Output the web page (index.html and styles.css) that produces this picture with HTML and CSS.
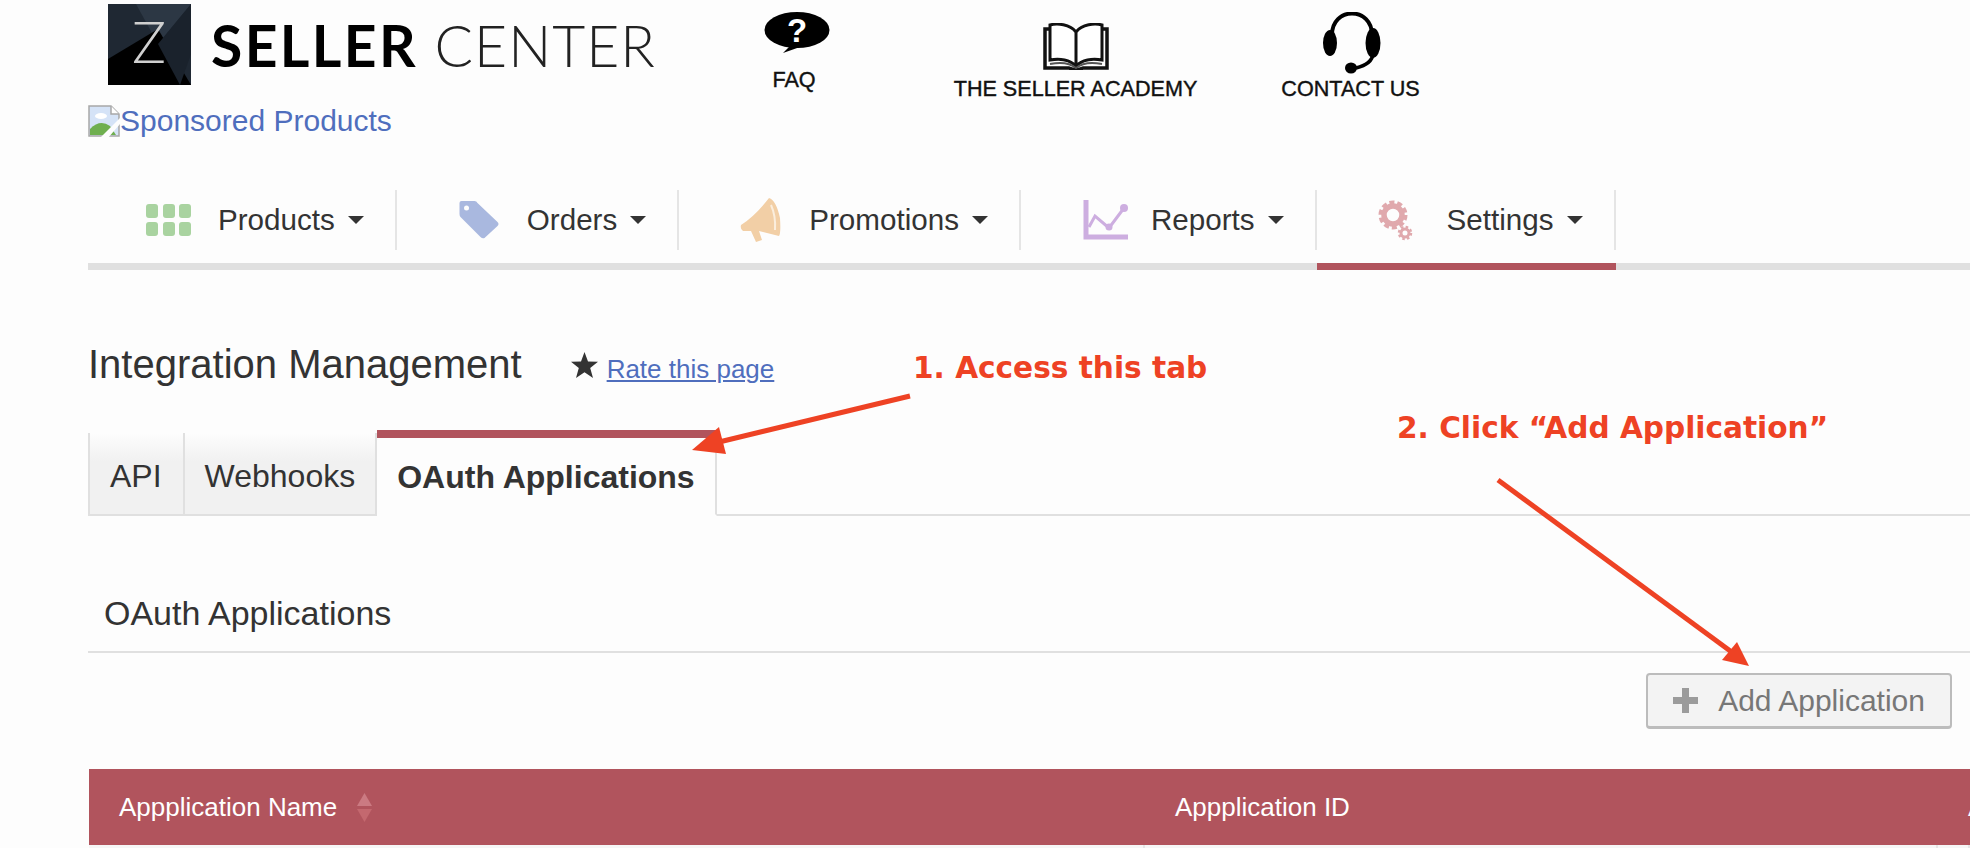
FILE: index.html
```html
<!DOCTYPE html>
<html lang="en">
<head>
    <meta charset="UTF-8">
    <title>Integration Management</title>
    <link rel="stylesheet" href="styles.css">
</head>
<body>
    <div class="page">
        <header class="header">
            <a class="logo">
                <svg class="logo-mark" width="83" height="81" viewBox="0 0 83 81">
                    <rect width="83" height="81" fill="#1f2833"/>
                    <polygon points="28,0 83,0 50,40" fill="#2c3744"/>
                    <polygon points="0,55 50,25 83,81 0,81" fill="#000"/>
                    <polygon points="50,40 83,0 83,50 72,81" fill="#1a222c"/>
                    <text x="41" y="59" text-anchor="middle" class="logo-z">Z</text>
                </svg>
                <span class="logo-text"><b>SELLER</b> CENTER</span>
            </a>
            <a class="help-link help-faq">
                <svg class="faq-icon" width="66" height="42" viewBox="0 0 66 42">
                    <ellipse cx="33" cy="18" rx="32.5" ry="18" fill="#000"/>
                    <path d="M27 33 L36 35 L19 41 Z" fill="#000"/>
                    <text x="33" y="30" text-anchor="middle" class="faq-mark">?</text>
                </svg>
                <span>FAQ</span>
            </a>
            <a class="help-link help-academy">
                <svg width="68" height="47" viewBox="0 0 68 47">
                    <path d="M34 9 C28 1 15 0 8 2 V37 C18 35 28 37 34 43 C40 37 50 35 60 37 V2 C53 0 40 1 34 9 V43" fill="#fff" stroke="#111" stroke-width="3"/>
                    <path d="M8 6 H3 V45 H27 Q34 48 41 45 H65 V6 H60" fill="none" stroke="#111" stroke-width="3.5"/>
                    <path d="M8 41 C18 39 28 40 34 45 C40 40 50 39 60 41" fill="none" stroke="#555" stroke-width="2"/>
                </svg>
                <span>THE SELLER ACADEMY</span>
            </a>
            <a class="help-link help-contact">
                <svg class="contact-icon" width="60" height="62" viewBox="0 0 60 62">
                    <path d="M10 24 C9 -6 51 -6 50 24" fill="none" stroke="#000" stroke-width="4"/>
                    <ellipse cx="8" cy="31" rx="7" ry="13" fill="#000"/>
                    <ellipse cx="51" cy="31" rx="7.5" ry="15" fill="#000"/>
                    <path d="M51 42 Q50 52 34 56" fill="none" stroke="#000" stroke-width="3.5"/>
                    <ellipse cx="29" cy="56" rx="6" ry="5.5" fill="#000"/>
                </svg>
                <span>CONTACT US</span>
            </a>
        </header>

        <a class="sponsored">
            <svg width="32" height="32" viewBox="0 0 32 32">
                <path d="M1 1 H23 L31 9 V31 H1 Z" fill="#d5e3f7" stroke="#a8a8a8" stroke-width="1.5"/>
                <path d="M23 1 V9 H31" fill="#fff" stroke="#a8a8a8" stroke-width="1.5"/>
                <ellipse cx="13" cy="11" rx="6" ry="3" fill="#fff"/>
                <path d="M2 30 V24 Q12 14 22 21 L28 30 Z" fill="#6faf4f"/>
                <path d="M12 33 L32 13 V19 L20 33 Z" fill="#fdfdfd"/>
            </svg><span>Sponsored Products</span>
        </a>

        <nav class="nav">
            <a class="nav-item">
                <span class="nav-inner">
                    <svg class="nav-icon" width="46" height="32" viewBox="0 0 46 32" fill="#a9d3a0">
                        <rect x="0" y="0" width="12" height="14" rx="3"/>
                        <rect x="17" y="0" width="12" height="14" rx="3"/>
                        <rect x="33" y="0" width="12" height="14" rx="3"/>
                        <rect x="0" y="18" width="12" height="14" rx="3"/>
                        <rect x="17" y="18" width="12" height="14" rx="3"/>
                        <rect x="33" y="18" width="12" height="14" rx="3"/>
                    </svg>
                    <span>Products</span><i class="caret"></i>
                </span>
            </a>
            <a class="nav-item">
                <span class="nav-inner">
                    <svg class="nav-icon" width="46" height="38" viewBox="-4.5 0 46 38">
                        <path d="M2 0 H15 Q17 0 18 2 L38 21 Q40 23 38 25 L25 37 Q23 38 21 36 L1 16 Q0 15 0 13 V2 Q0 0 2 0 Z" fill="#a9b8df"/>
                        <circle cx="7" cy="7" r="2.5" fill="#fdfdfd"/>
                    </svg>
                    <span>Orders</span><i class="caret"></i>
                </span>
            </a>
            <a class="nav-item">
                <span class="nav-inner">
                    <svg class="nav-icon" width="46" height="44" viewBox="-3 0 46 44">
                        <path d="M1 27 Q0 31 3 33 L11 33 L16 44 L22 42 L19 33 L39 38 Q41 36 40 20 Q36 2 29 0 Q15 18 1 27 Z" fill="#f2cfa6"/>
                        <path d="M31 7 Q36 18 35 32" fill="none" stroke="#fbeedd" stroke-width="2"/>
                    </svg>
                    <span>Promotions</span><i class="caret"></i>
                </span>
            </a>
            <a class="nav-item">
                <span class="nav-inner">
                    <svg class="nav-icon" width="46" height="40" viewBox="-4 0 46 40">
                        <path d="M3 0 V37 H45" fill="none" stroke="#cdaee0" stroke-width="5"/>
                        <path d="M6 27 L12 16 L26 28 L41 8" fill="none" stroke="#cdaee0" stroke-width="3"/>
                        <circle cx="26" cy="27" r="3.5" fill="#cdaee0"/>
                        <circle cx="41" cy="8" r="4" fill="#cdaee0"/>
                    </svg>
                    <span>Reports</span><i class="caret"></i>
                </span>
            </a>
            <a class="nav-item active">
                <span class="nav-inner">
                    <svg class="nav-icon" width="46" height="41" viewBox="-3 0 46 41" fill="none" stroke="#e0a9ad">
                        <circle cx="15" cy="15" r="9" stroke-width="5.5"/>
                        <circle cx="15" cy="15" r="12.5" stroke-width="4" stroke-dasharray="5 2.85"/>
                        <circle cx="27" cy="33" r="4" stroke-width="3"/>
                        <circle cx="27" cy="33" r="6" stroke-width="2.5" stroke-dasharray="2.5 2.2"/>
                    </svg>
                    <span>Settings</span><i class="caret"></i>
                </span>
            </a>
        </nav>

        <div class="title-row">
            <h1>Integration Management</h1>
            <svg class="star" width="27" height="26" viewBox="0 0 27 26">
                <polygon points="13.5,0 17,9.5 27,9.8 19.2,16 22,26 13.5,20.2 5,26 7.8,16 0,9.8 10,9.5" fill="#333"/>
            </svg>
            <a class="rate-link">Rate this page</a>
        </div>

        <div class="tabs">
            <a class="tab first">API</a>
            <a class="tab">Webhooks</a>
            <a class="tab current">OAuth Applications</a>
        </div>

        <h2 class="panel-title">OAuth Applications</h2>

        <div class="toolbar">
            <button class="add-btn">
                <svg width="25" height="25" viewBox="0 0 25 25">
                    <path d="M12.5 0 V25 M0 12.5 H25" stroke="#9b9b9b" stroke-width="7"/>
                </svg>
                Add Application
            </button>
        </div>

        <div class="table">
            <div class="table-head">
                <div class="cell">
                    Appplication Name
                    <svg class="sort" width="15" height="29" viewBox="0 0 15 29">
                        <polygon points="7.5,0 15,13 0,13" fill="#cb7a82"/>
                        <polygon points="0,16 15,16 7.5,29" fill="#c4686f"/>
                    </svg>
                </div>
                <div class="cell">Appplication ID</div>
                <div class="cell">A</div>
            </div>
            <div class="table-row">
                <div class="cell"></div>
                <div class="cell"></div>
                <div class="cell"></div>
            </div>
        </div>

        <!-- annotations drawn on top of the screenshot -->
        <div class="note note-one">1. Access this tab</div>
        <div class="note note-two">2. Click “Add Application”</div>
        <svg class="arrows" width="1970" height="848" viewBox="0 0 1970 848">
            <path d="M910 396 L715 443" stroke="#ee4224" stroke-width="5" fill="none"/>
            <polygon points="692,450 719,427 726,454" fill="#ee4224"/>
            <path d="M1498 480 L1733 653" stroke="#ee4224" stroke-width="5" fill="none"/>
            <polygon points="1749,666 1722,660 1737,642" fill="#ee4224"/>
        </svg>
    </div>
</body>
</html>
```

FILE: styles.css
```css
html, body {
    margin: 0;
    height: 848px;
    overflow: hidden;
}
body {
    font-family: "Liberation Sans", Arial, sans-serif;
    background-color: #fdfdfd;
    color: #333;
}
.page {
    position: relative;
    width: 1970px;
    height: 848px;
    padding-left: 88px;
    box-sizing: border-box;
    overflow: hidden;
}

/* header */
.header {
    display: flex;
    height: 105px;
}
.logo {
    display: flex;
    align-items: flex-start;
    margin-left: 20px;
    width: 545px;
}
.logo-mark {
    flex-shrink: 0;
    margin-top: 4px;
}
.logo-z {
    font-family: Lato, sans-serif;
    font-weight: 300;
    font-size: 57px;
    fill: #d0d0d0;
}
.logo-text {
    font-family: Lato, sans-serif;
    font-weight: 300;
    font-size: 57px;
    line-height: 90px;
    letter-spacing: 1px;
    color: #222;
    margin-left: 20px;
    white-space: nowrap;
}
.logo-text b {
    font-weight: 700;
    letter-spacing: 2.4px;
    color: #000;
}
.help-link {
    display: flex;
    flex-direction: column;
    align-items: center;
    font-size: 21.6px;
    color: #111;
    -webkit-text-stroke: 0.4px #111;
    white-space: nowrap;
}
.help-faq {
    margin-left: 101px;
    width: 80px;
    padding-top: 12px;
}
.help-faq span {
    margin-top: 13px;
}
.faq-icon {
    margin-left: 5px;
}
.help-academy {
    margin-left: 119px;
    width: 245px;
    padding-top: 23px;
}
.help-academy span {
    margin-top: 6px;
}
.help-contact {
    margin-left: 82px;
    width: 141px;
    padding-top: 12px;
}
.help-contact span {
    margin-top: 2px;
}
.contact-icon {
    margin-left: 2px;
}
.faq-mark {
    font-family: "Liberation Sans", sans-serif;
    font-weight: 700;
    font-size: 33px;
    fill: #fff;
}

.sponsored {
    display: flex;
    align-items: center;
    height: 32px;
    font-size: 30px;
    color: #4f6ebd;
}

/* main nav */
.nav {
    display: flex;
    margin-top: 53px;
    border-bottom: 7px solid #e0e0e0;
}
.nav-item {
    padding-bottom: 13px;
    margin-bottom: -7px;
    border-bottom: 7px solid transparent;
}
.nav-item.active {
    border-bottom-color: #b1545d;
}
.nav-inner {
    display: flex;
    align-items: center;
    height: 60px;
    padding: 0 31px 0 58px;
    border-right: 2px solid #e5e5e5;
    font-size: 29.6px;
}
.nav-icon {
    margin-right: 26px;
    overflow: visible;
}
.caret {
    margin-left: 13px;
    border-style: solid;
    border-width: 8px 8px 0;
    border-color: #333 transparent transparent;
}

/* page title */
.title-row {
    display: flex;
    align-items: baseline;
    margin-top: 70px;
}
h1 {
    margin: 0;
    font-size: 40px;
    font-weight: normal;
    line-height: 48px;
}
.star {
    margin-left: 49px;
}
.rate-link {
    margin-left: 9px;
    font-size: 26px;
    color: #4f6ebd;
    text-decoration: underline;
}

/* tabs */
.tabs {
    display: flex;
    align-items: flex-end;
    margin-top: 42px;
    height: 84px;
    border-bottom: 2px solid #e0e0e0;
}
.tab {
    display: flex;
    align-items: center;
    box-sizing: border-box;
    height: 83px;
    margin-bottom: -2px;
    padding: 5px 20px 0;
    font-size: 32px;
    background: linear-gradient(#fdfdfd, #f1f1f1 35%);
    border: 2px solid #e0e0e0;
    border-width: 0 2px 2px 0;
}
.tab.first {
    padding-right: 21px;
    border-left-width: 2px;
}
.tab.current {
    height: 86px;
    padding-top: 3px;
    font-weight: bold;
    background: #fdfdfd;
    border-top: 8px solid #b1545d;
    border-bottom-color: #fdfdfd;
}

.panel-title {
    margin: 0;
    padding: 77px 0 18px 16px;
    font-size: 34px;
    font-weight: normal;
    line-height: 40px;
    border-bottom: 2px solid #e0e0e0;
}

.toolbar {
    display: flex;
    justify-content: flex-end;
    margin-top: 20px;
    padding-right: 18px;
}
.add-btn {
    display: flex;
    align-items: center;
    gap: 20px;
    box-sizing: border-box;
    height: 56px;
    padding: 0 25px;
    font-family: inherit;
    font-size: 30px;
    color: #777;
    background: #f3f3f3;
    border: 2px solid #bcbcbc;
    border-bottom-width: 3px;
    border-radius: 4px;
}

/* table */
.table {
    margin: 40px 0 0 1px;
}
.table-head, .table-row {
    display: grid;
    grid-template-columns: 1056px 793px 1fr;
}
.table-head {
    height: 76px;
    align-items: center;
    background: #b1545d;
    color: #fff;
    font-size: 26px;
}
.table-head .cell {
    display: flex;
    align-items: center;
    padding-left: 30px;
    white-space: nowrap;
}
.sort {
    margin-left: 20px;
}
.table-row {
    height: 20px;
    background: #f6f6f6;
}
.table-row .cell {
    border-right: 2px solid #e6e6e6;
}

/* annotations */
.note {
    position: absolute;
    font-family: "DejaVu Sans", Verdana, sans-serif;
    font-weight: bold;
    font-size: 29.6px;
    line-height: 34px;
    color: #ee4224;
    white-space: nowrap;
}
.note-one {
    left: 913px;
    top: 351px;
}
.note-two {
    left: 1397px;
    top: 411px;
}
.arrows {
    position: absolute;
    left: 0;
    top: 0;
    pointer-events: none;
}
```
